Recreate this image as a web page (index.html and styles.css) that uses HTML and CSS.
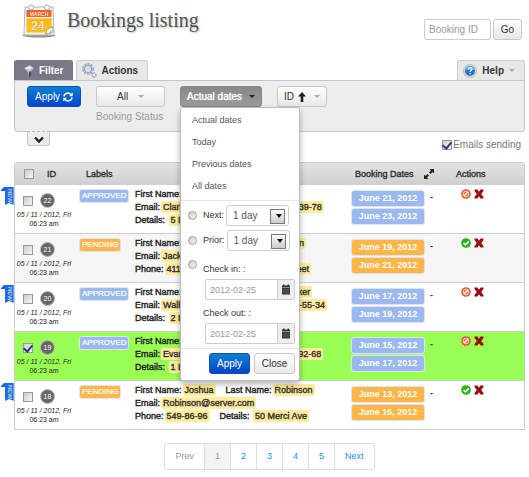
FILE: index.html
```html
<!DOCTYPE html>
<html lang="en">
<head>
<meta charset="utf-8">
<title>Bookings listing</title>
<link rel="stylesheet" href="styles.css">
</head>
<body>
<svg class="sprite" aria-hidden="true">
  <symbol id="deny" viewBox="0 0 10 10">
    <circle cx="5" cy="5" r="4.800" fill="#e8532f"/>
    <circle cx="5" cy="5" r="2.900" fill="#ee7350" stroke="#fbd9cf" stroke-width=".9"/>
    <path d="M3 7 7 3" stroke="#fff" stroke-width="1.200"/>
  </symbol>
  <symbol id="accept" viewBox="0 0 10 10">
    <circle cx="5" cy="5" r="4.800" fill="#27b512"/>
    <path d="m2.500 5 1.900 1.900L7.700 3.400" fill="none" stroke="#fff" stroke-width="1.600"/>
  </symbol>
  <symbol id="remove" viewBox="0 0 10 10">
    <path d="M.5.500h3L5 2.800 6.500.500h3V2L7.200 5l2.300 3v1.500h-3L5 7.200 3.500 9.500h-3V8l2.300-3L.5 2z" fill="#980d10"/>
  </symbol>
  <symbol id="calendar" viewBox="0 0 10 10">
    <path d="M1 1h1V0h1.500v1h3V0H8v1h1v2H1zM1 3.500h8V10H1z" fill="#333"/>
    <path d="M1 5.500h8M1 7.500h8M3 4v6M5 4v6M7 4v6" stroke="#777" stroke-width=".4"/>
  </symbol>
</svg>

<header class="top">
  <svg class="logo" viewBox="0 0 34 34" aria-hidden="true">
    <ellipse cx="17" cy="31.500" rx="16.500" ry="2" fill="#666" opacity=".7"/>
    <path d="M3 3h28l1 28H2z" fill="#f4f4f4" stroke="#b5b5b5"/>
    <path d="M4.500 6h25v7h-25z" fill="#e8642a"/>
    <path d="M4.500 14.500h25v14h-25z" fill="#fbc01b"/>
    <path d="M4.500 14.500h25v6h-25z" fill="#fdb813" opacity=".6"/>
    <circle cx="9" cy="3.500" r="2.500" fill="#fff" stroke="#aaa"/>
    <circle cx="25" cy="3.500" r="2.500" fill="#fff" stroke="#aaa"/>
    <text x="17" y="12" text-anchor="middle" font-family="Liberation Sans" font-size="5" font-weight="bold" fill="#ffd9c2">MARCH</text>
    <text x="16" y="26" text-anchor="middle" font-family="Liberation Sans" font-size="12" font-weight="bold" fill="#fff" stroke="#d9972b" stroke-width=".4">24</text>
    <path d="m23 30 7-8v3l-5 5.500z" fill="#f3f6e8" stroke="#8d927f" stroke-width=".7"/>
    <path d="m24 30 1-4.500 6-2.500-1 6z" fill="#f7f9ee" stroke="#8d927f" stroke-width=".6"/>
    <path d="m26.500 29.500 3-4v3.500z" fill="#a5c46a"/>
  </svg>
  <h1>Bookings listing</h1>
  <form class="search">
    <input class="field" type="text" placeholder="Booking ID" aria-label="Booking ID">
    <button class="btn go" type="button">Go</button>
  </form>
</header>

<main>
  <nav class="tabs">
    <a class="tab active" href="#filter"><svg width="12" height="14" viewBox="0 0 12 14" aria-hidden="true"><path d="m1 4 6-3 4 3-3 4v4l-2 1.500-1-5z" fill="#b9b9bf"/><path d="m2 4 5-2 2 2-3 2z" fill="#eee"/><path d="m6 8 2-1v5l-2 1.500z" fill="#45454d"/></svg>Filter</a>
    <a class="tab" href="#actions"><svg width="15" height="15" viewBox="0 0 15 15" aria-hidden="true"><circle cx="6" cy="6" r="5" fill="none" stroke="#9db0c8" stroke-width="2" stroke-dasharray="2.200 1"/><circle cx="6" cy="6" r="3.500" fill="#e4edf6" stroke="#8ea5c0" stroke-width="1.200"/><circle cx="6" cy="6" r="1.300" fill="#fff" stroke="#9db0c8" stroke-width=".6"/><circle cx="12" cy="12" r="2" fill="#e4edf6" stroke="#8ea5c0" stroke-width="1.400" stroke-dasharray="1.400 .6"/></svg>Actions</a>
    <a class="tab help" href="#help"><svg width="14" height="14" viewBox="0 0 14 14" aria-hidden="true"><circle cx="7" cy="7" r="6.500" fill="#ddd" stroke="#aaa" stroke-width=".7"/><circle cx="7" cy="7" r="5" fill="#2477cf"/><path d="M2.500 6a4.600 4.600 0 0 1 9 0z" fill="#60a8ea"/><path d="M5.400 5.500c0-2.400 3.400-2.300 3.400-.3 0 1.400-1.700 1.300-1.700 2.700M7.100 9v1.300" fill="none" stroke="#fff" stroke-width="1.200"/></svg>Help<i class="caret pale"></i></a>
  </nav>

  <section class="panel">
    <button class="btn primary apply" type="button">Apply <svg width="10" height="10" viewBox="0 0 10 10" aria-hidden="true"><path d="M1 4.300C1.700.6 6 .2 8 2.600M9 5.700C8.300 9.400 4 9.800 2 7.400" fill="none" stroke="#fff" stroke-width="1.600"/><path d="M9.700.600v3.700H6zM.3 9.400V5.700H4z" fill="#fff"/></svg></button>
    <div class="group status">
      <button class="btn" type="button">All<i class="caret pale"></i></button>
      <span class="caption">Booking Status</span>
    </div>
    <div class="group dates-filter">
      <button class="btn open" type="button">Actual dates<i class="caret"></i></button>
      <div class="menu">
        <ul>
          <li><a href="#actual">Actual dates</a></li>
          <li><a href="#today">Today</a></li>
          <li><a href="#previous">Previous dates</a></li>
          <li><a href="#all">All dates</a></li>
        </ul>
        <div class="options">
          <div class="option"><input type="radio" name="range" id="r-next"><label for="r-next">Next:</label><span class="pick"><select aria-label="Next days"><option>1 day</option></select></span></div>
          <div class="option"><input type="radio" name="range" id="r-prior"><label for="r-prior">Prior:</label><span class="pick"><select aria-label="Prior days"><option>1 day</option></select></span></div>
          <div class="option period"><input type="radio" name="range" id="r-dates" aria-label="Dates">
            <div class="fields">
              <label for="check-in">Check in: :</label>
              <span class="date-box"><input id="check-in" type="text" placeholder="2012-02-25"><svg width="10" height="10"><use href="#calendar"/></svg></span>
              <label for="check-out">Check out: :</label>
              <span class="date-box"><input id="check-out" type="text" placeholder="2012-02-25"><svg width="10" height="10"><use href="#calendar"/></svg></span>
            </div>
          </div>
        </div>
        <div class="menu-foot">
          <button class="btn primary" type="button">Apply</button>
          <button class="btn" type="button">Close</button>
        </div>
      </div>
    </div>
    <div class="group sort">
      <button class="btn" type="button">ID<svg width="8" height="10" viewBox="0 0 8 10" aria-hidden="true"><path d="m4 0 4 4.500H5.300V10H2.700V4.500H0z" fill="#222"/></svg><i class="caret pale"></i></button>
    </div>
  </section>

  <div class="below">
    <button class="toggle" type="button" aria-label="Toggle filter"><svg width="10" height="8" viewBox="0 0 10 8" aria-hidden="true"><path d="m1 1.500 4 4 4-4" fill="none" stroke="#222" stroke-width="2.400"/></svg></button>
    <label class="emails"><input type="checkbox" checked>Emails sending</label>
  </div>

  <table>
    <colgroup><col class="c-id"><col class="c-label"><col><col class="c-dates"><col class="c-actions"></colgroup>
    <thead>
      <tr>
        <th><div class="pair"><input type="checkbox" aria-label="Select all">ID</div></th>
        <th class="labels">Labels</th>
        <th></th>
        <th><div class="dates-head">Booking Dates<svg width="10" height="10" viewBox="0 0 10 10" aria-hidden="true"><path d="M5.500 0H10v4.500L8.500 3 6.500 5 5 3.500l2-2zM4.500 10H0V5.500L1.500 7l2-2L5 6.500l-2 2z" fill="#222"/></svg></div></th>
        <th class="actions-head">Actions</th>
      </tr>
    </thead>
    <tbody>
      <tr>
        <td class="id"><span class="ribbon">NEW</span><div class="pair"><input type="checkbox" aria-label="Booking 22"><b class="num">22</b></div><div class="made"><i>05 / 11 / 2012, Fri</i><br>06:23 am</div></td>
        <td><span class="label">APPROVED</span></td>
        <td class="data"><div>First Name:<mark>Clark</mark></div><div>Email:<mark>Clark@server.com</mark>Phone:<mark>458-39-78</mark></div><div>Details: <mark>5 Dream Road</mark></div></td>
        <td><div class="range"><span class="day">June 21, 2012</span>-<span class="day">June 23, 2012</span></div></td>
        <td class="acts"><button type="button" aria-label="Reject"><svg><use href="#deny"/></svg></button><button type="button" aria-label="Delete"><svg><use href="#remove"/></svg></button></td>
      </tr>
      <tr class="alt">
        <td class="id"><div class="pair"><input type="checkbox" aria-label="Booking 21"><b class="num">21</b></div><div class="made"><i>05 / 11 / 2012, Fri</i><br>06:23 am</div></td>
        <td><span class="label pending">PENDING</span></td>
        <td class="data"><div>First Name:<mark>Jackie</mark>Last Name:<mark>Jackson</mark></div><div>Email:<mark>Jackson@server.com</mark></div><div>Phone:<mark>411-85-60</mark>Details: <mark>17 Elm Street</mark></div></td>
        <td><div class="range pending"><span class="day">June 19, 2012</span>-<span class="day">June 21, 2012</span></div></td>
        <td class="acts"><button type="button" aria-label="Approve"><svg><use href="#accept"/></svg></button><button type="button" aria-label="Delete"><svg><use href="#remove"/></svg></button></td>
      </tr>
      <tr>
        <td class="id"><span class="ribbon">NEW</span><div class="pair"><input type="checkbox" aria-label="Booking 20"><b class="num">20</b></div><div class="made"><i>05 / 11 / 2012, Fri</i><br>06:23 am</div></td>
        <td><span class="label">APPROVED</span></td>
        <td class="data"><div>First Name:<mark>Jonathan</mark>Last Name:<mark>Walker</mark></div><div>Email:<mark>Walks@server.com</mark>Phone:<mark>689-55-34</mark></div><div>Details: <mark>2 Hill Road</mark></div></td>
        <td><div class="range"><span class="day">June 17, 2012</span>-<span class="day">June 19, 2012</span></div></td>
        <td class="acts"><button type="button" aria-label="Reject"><svg><use href="#deny"/></svg></button><button type="button" aria-label="Delete"><svg><use href="#remove"/></svg></button></td>
      </tr>
      <tr class="chosen">
        <td class="id"><div class="pair"><input type="checkbox" aria-label="Booking 19" checked><b class="num">19</b></div><div class="made"><i>05 / 11 / 2012, Fri</i><br>06:23 am</div></td>
        <td><span class="label">APPROVED</span></td>
        <td class="data"><div>First Name:<mark>Evan</mark></div><div>Email:<mark>Evan@server.com</mark>Phone:<mark>412-92-68</mark></div><div>Details: <mark>1 Lake View</mark></div></td>
        <td><div class="range"><span class="day">June 15, 2012</span>-<span class="day">June 17, 2012</span></div></td>
        <td class="acts"><button type="button" aria-label="Reject"><svg><use href="#deny"/></svg></button><button type="button" aria-label="Delete"><svg><use href="#remove"/></svg></button></td>
      </tr>
      <tr>
        <td class="id"><span class="ribbon">NEW</span><div class="pair"><input type="checkbox" aria-label="Booking 18"><b class="num">18</b></div><div class="made"><i>05 / 11 / 2012, Fri</i><br>06:23 am</div></td>
        <td><span class="label pending">PENDING</span></td>
        <td class="data"><div>First Name:<mark>Joshua</mark>Last Name:<mark>Robinson</mark></div><div>Email:<mark>Robinson@server.com</mark></div><div>Phone:<mark>549-86-96</mark>Details: <mark>50 Merci Ave</mark></div></td>
        <td><div class="range pending"><span class="day">June 13, 2012</span>-<span class="day">June 15, 2012</span></div></td>
        <td class="acts"><button type="button" aria-label="Approve"><svg><use href="#accept"/></svg></button><button type="button" aria-label="Delete"><svg><use href="#remove"/></svg></button></td>
      </tr>
    </tbody>
  </table>

  <nav class="pager" aria-label="Pages">
    <a class="off" href="#prev">Prev</a><a class="off here" href="#1">1</a><a href="#2">2</a><a href="#3">3</a><a href="#4">4</a><a href="#5">5</a><a href="#next">Next</a>
  </nav>
</main>
</body>
</html>
```
FILE: styles.css
```css
* { box-sizing: border-box; }

body {
  margin: 0;
  background: #fff;
  color: #333;
  font: 9px/13px "Liberation Sans", Arial, sans-serif;
}

button, input, select { font: inherit; color: inherit; margin: 0; }
a { color: inherit; text-decoration: none; }
svg { flex: none; }
.sprite { display: none; }

/* Page header */
.top {
  display: flex;
  align-items: flex-start;
  height: 60px;
  padding: 4px 7px 0 22px;
}
.logo { width: 34px; height: 34px; }
h1 {
  flex: 1;
  margin: 4px 0 0 11px;
  color: #555;
  font: 20px/24px "Liberation Serif", Georgia, serif;
  text-shadow: 1px 1px 2px #bbb;
}
.search { display: flex; gap: 2px; margin-top: 15px; }
.field {
  width: 67px;
  height: 21px;
  padding: 0 4px;
  border: 1px solid #ccc;
  border-radius: 2px;
  font-size: 10px;
}
::placeholder { color: #999; opacity: 1; }

/* Buttons */
.btn {
  display: inline-flex;
  align-items: center;
  justify-content: center;
  height: 21px;
  padding: 0 7px;
  border: 1px solid #c8c8c8;
  border-radius: 3px;
  background: linear-gradient(#fff, #e8e8e8);
  font-size: 10px;
  white-space: pre;
}
.go { width: 29px; }
.primary {
  border-color: #0a50b0;
  background: linear-gradient(#0c80d2, #0444cc);
  color: #fff;
}
.open {
  border-color: #888;
  background: linear-gradient(#888, #9b9b9b);
  color: #fff;
  text-shadow: 0 0 1px #fff;
}
.caret {
  border: 3px solid transparent;
  border-top-color: #222;
  border-bottom: 0;
}
.pale { border-top-color: #aaa; }

main { padding: 0 4px 0 14px; }

/* Tabs */
.tabs { display: flex; gap: 3px; height: 20px; }
.tab {
  display: flex;
  align-items: center;
  gap: 4px;
  padding: 0 9px 0 5px;
  border: 1px solid #ccc;
  border-bottom: 0;
  border-radius: 3px 3px 0 0;
  background: #e8e8e8;
  font-size: 10px;
  font-weight: bold;
}
.active {
  padding-left: 8px;
  border-color: #747484;
  background: #787887;
  color: #fff;
}
.help { margin-left: auto; gap: 5px; }

/* Filter panel */
.panel {
  display: flex;
  align-items: flex-start;
  gap: 15px;
  height: 52px;
  padding: 5px 12px;
  border: 1px solid #c4c4cf;
  border-radius: 0 0 3px 3px;
  background: #ededed;
}
.apply { width: 54px; }
.group { position: relative; display: flex; flex-direction: column; }
.group .btn { justify-content: space-between; }
.status { width: 69px; }
.status .btn { padding: 0 20px; }
.dates-filter { width: 82px; }
.dates-filter > .btn { padding: 0 6px; }
.sort { width: 50px; }
.sort .btn { justify-content: flex-start; gap: 4px; padding: 0 6px; }
.sort .caret { margin-left: auto; }
.caption {
  margin-top: 3px;
  color: #999;
  font-size: 10px;
  white-space: nowrap;
}

/* Drop-down menu over the table */
.menu {
  position: absolute;
  z-index: 2;
  top: 21px;
  left: 0;
  width: 120px;
  padding-bottom: 6px;
  border: 1px solid #bbb;
  border-radius: 3px;
  background: #fff;
  box-shadow: 0 3px 6px rgba(0, 0, 0, .3);
}
.menu ul {
  margin: 0;
  padding: 1px 0 3px;
  border-bottom: 1px solid #e5e5e5;
  list-style: none;
}
.menu li a { display: block; padding-left: 11px; color: #555; line-height: 22px; }
.options { display: flex; flex-direction: column; gap: 4px; padding: 4px 4px 4px 7px; }
.option { display: flex; align-items: center; gap: 2px; }
.option label { margin-left: 4px; }
.menu .btn { justify-content: center; }
.period { align-items: flex-start; padding-top: 5px; }
.fields { display: flex; flex: 1; flex-direction: column; padding-top: 3px; }
.fields label { margin: 0 0 3px 4px; }
.date-box {
  display: flex;
  align-items: center;
  height: 21px;
  margin: 0 0 7px 6px;
  border: 1px solid #ccc;
  border-radius: 2px;
}
.date-box:last-child { margin-bottom: 0; }
.date-box input {
  flex: 1;
  width: 0;
  height: 19px;
  padding: 0 4px;
  border: 0;
  border-right: 1px solid #ccc;
}
.date-box svg { width: 16px; background: #eee; height: 19px; padding: 4px 3px; }
.pick { position: relative; width: 63px; }
.pick select {
  display: block;
  width: 100%;
  height: 21px;
  padding: 0 6px;
  border: 1px solid #ccc;
  border-radius: 3px;
  appearance: none;
  background: #fff;
  color: #555;
  font-size: 10px;
}
.pick::before {
  content: "";
  position: absolute;
  top: 4px;
  right: 4px;
  width: 13px;
  height: 13px;
  border: 1px solid #777;
  background: linear-gradient(#fafafa, #ccc);
  pointer-events: none;
}
.pick::after {
  content: "";
  position: absolute;
  top: 9px;
  right: 7px;
  border: 3px solid transparent;
  border-top: 4px solid #111;
  border-bottom: 0;
  pointer-events: none;
}
.menu-foot {
  display: flex;
  justify-content: flex-end;
  gap: 4px;
  padding: 4px 4px 0;
  border-top: 1px solid #e5e5e5;
}
.menu-foot .btn { width: 41px; }

/* Tick boxes and radios */
input[type="checkbox"], input[type="radio"] {
  display: flex;
  align-items: center;
  justify-content: center;
  flex: none;
  width: 10px;
  height: 10px;
  border: 1px solid #999;
  appearance: none;
  background: linear-gradient(135deg, #ccc, #f6f6f6);
}
input[type="radio"] { width: 9px; height: 9px; border-radius: 50%; }
input[type="checkbox"]:checked::after {
  content: "";
  width: 4px;
  height: 7px;
  border: solid #2b3f8c;
  border-width: 0 2px 2px 0;
  transform: rotate(40deg);
}

.below {
  display: flex;
  align-items: flex-start;
  justify-content: space-between;
  height: 30px;
  padding: 0 4px 0 13px;
}
.toggle {
  display: flex;
  justify-content: center;
  width: 23px;
  height: 15px;
  margin-top: -1px;
  padding: 4px 0 0;
  border: 1px solid #c4c4cf;
  border-top: 1px dashed #bbb;
  border-radius: 0 0 3px 3px;
  background: #ededed;
}
.emails { display: flex; align-items: center; gap: 1px; padding-top: 6px; color: #777; font-size: 10px; }

/* Bookings table */
table {
  width: 100%;
  border: 1px solid #ccc;
  border-bottom: 0;
  border-radius: 3px 3px 0 0;
  border-spacing: 0;
  table-layout: fixed;
}
.c-id { width: 62px; }
.c-label { width: 58px; }
.c-dates { width: 97px; }
.c-actions { width: 79px; }
th {
  height: 22px;
  padding: 0;
  background: linear-gradient(#e4e4e4, #cfcfcf);
  font-weight: normal;
  text-align: left;
}
th, .data { -webkit-text-stroke: 0.4px currentColor; }
.labels { padding-left: 9px; }
.actions-head { padding-left: 11px; }
.dates-head { display: flex; align-items: center; gap: 10px; padding-left: 7px; }
td {
  height: 49px;
  padding: 3px 0 0 3px;
  border-bottom: 1px solid #ccc;
  vertical-align: top;
}
.alt td { background: #f6f6f6; }
.chosen td { background: #9f5; }
td.id { position: relative; padding-left: 0; }
.ribbon {
  position: absolute;
  top: 2px;
  left: -14px;
  width: 13px;
  height: 18px;
  padding: 2px 0 0 4px;
  background: linear-gradient(90deg, #1d5fd0 4px, #1e6ae0 4px 12px, #5d9df5 12px);
  clip-path: polygon(0 3px, 3px 0, 100% 0, 100% 100%, 8px 16px, 4px 100%, 4px 4px, 0 4px);
  color: #e6f0ff;
  font-size: 6px;
  line-height: 9px;
  writing-mode: vertical-rl;
}
.pair { display: flex; align-items: center; gap: 7px; padding-left: 8px; }
th .pair { gap: 13px; padding-left: 9px; }
td .pair { padding-top: 5px; }
.num {
  width: 15px;
  height: 15px;
  border: 1px solid #bbb;
  border-radius: 50%;
  background: #666;
  color: #fff;
  font-size: 7px;
  font-weight: normal;
  line-height: 13px;
  text-align: center;
}
.made { width: 58px; color: #222; font-size: 7px; line-height: 9px; text-align: center; white-space: nowrap; padding-top: 2px; }
.label {
  display: inline-block;
  margin-top: 2px;
  padding: 0 2px;
  border-radius: 2px;
  background: #9bb9ee;
  box-shadow: 0 0 0 1px #dde3f0;
  color: #fff;
  font-size: 8px;
  line-height: 12px;
  -webkit-text-stroke: 0.2px currentColor;
}
.label.pending, .pending .day { background: #ffb547; }
.data { padding-left: 0; color: #222; white-space: nowrap; }
.data mark {
  margin: 0 10px 0 1px;
  padding: 1px 2px;
  border-radius: 2px;
  background: #ffec9c;
  color: #333;
}
.range { display: grid; grid-template-columns: 72px auto; gap: 3px 6px; padding: 3px 0 0 1px; font-weight: bold; }
.day {
  height: 15px;
  border-radius: 2px;
  background: #9bb9ee;
  box-shadow: 0 0 0 1px #dde3f0;
  color: #fff;
  line-height: 15px;
  text-align: center;
}
.acts { padding-left: 16px; }
.acts button { width: 10px; height: 10px; margin: 1px 3px 0 0; padding: 0; border: 0; background: none; }
.acts svg { display: block; width: 10px; height: 10px; }

/* Pagination */
.pager {
  display: flex;
  width: fit-content;
  margin: 13px auto 0;
  border: 1px solid #ddd;
  border-radius: 3px;
  color: #1a8fd8;
  line-height: 25px;
}
.pager a { padding: 0 10px; border-left: 1px solid #ddd; }
.pager a:first-child { border-left: 0; }
.off { color: #999; }
.here { background: #f3f3f3; }
```
